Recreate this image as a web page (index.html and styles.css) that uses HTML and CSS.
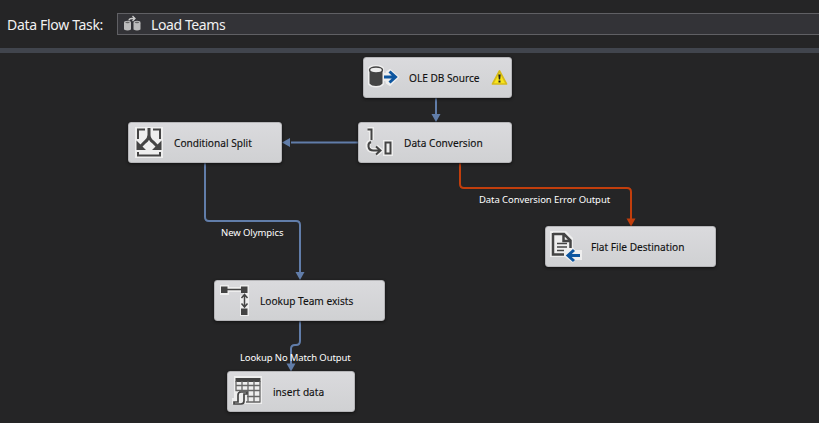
FILE: index.html
```html
<!DOCTYPE html>
<html lang="en">
<head>
<meta charset="utf-8">
<title>Data Flow Task</title>
<link rel="stylesheet" href="styles.css">
</head>
<body>
<header class="toolbar">
  <span class="toolbar-label">Data Flow Task:</span>
  <div class="picker">
    <svg class="picker-icon" width="20" height="18" viewBox="0 0 20 18">
      <g fill="#bcbcbc"><path d="M2 8v6.500q3.500 2 7 0V8zM11.500 8v6.500q3.500 2 7 0V8z"/><ellipse cx="5.500" cy="7.500" rx="3.500" ry="1.800"/><ellipse cx="15" cy="7.500" rx="3.500" ry="1.800"/></g>
      <g fill="#666"><ellipse cx="5.500" cy="7.500" rx="2.200" ry=".7"/><ellipse cx="15" cy="7.500" rx="2.200" ry=".7"/></g>
      <path d="M7 5.500q0-2 3-2h3M10.500 1l2.500 2.500L10.500 6" fill="none" stroke="#ccc" stroke-width="1.300"/>
    </svg>
    <span class="picker-text">Load Teams</span>
  </div>
</header>
<main class="canvas">
  <svg class="wires" width="819" height="370" viewBox="0 53 819 370">
    <g class="wire">
      <path d="M436 97v18M358 142.500h-67M205 163v54q0 4 4 4h87q4 0 4 4v49M300 320v21q0 4-4 4h-1q-4 0-4 4v15"/>
    </g>
    <path class="wire-error" d="M460 162v22q0 4 4 4h163q4 0 4 4v28"/>
    <g fill="#617da9"><path d="M431.500 114h9l-4.500 8zM290 138v9l-8-4.500zM295.500 272h9l-4.500 8zM286.500 363.500h9l-4.500 8z"/></g>
    <path fill="#c23e0c" d="M626.500 218.500h9l-4.500 8z"/>
  </svg>
  <span class="wire-label label-error">Data Conversion Error Output</span>
  <span class="wire-label label-new">New Olympics</span>
  <span class="wire-label label-nomatch">Lookup No Match Output</span>

  <div class="node source">
    <svg class="icon" width="40" height="40" viewBox="0 0 40 40">
      <path d="M6 12q0-3 7-3t7 3v5h4v-2l3-2 8 7-8 8-3-2-1-3h-3v4q-2 2.500-7 2.500t-7-2.500z" fill="#eee" stroke="#eee" stroke-width="2"/>
      <path d="M6.500 13v13.500q2 2.500 6.500 2.500t6.500-2.500V13z" fill="#444"/>
      <ellipse cx="13" cy="13" rx="6.500" ry="3" fill="#eee" stroke="#444" stroke-width="1.500"/>
      <path d="M20 20h12M26 14.500l6 5.500-6 5.500" class="blue-arrow halo"/>
      <path d="M21 20h11M26.500 14.500l6 5.500-6 5.500" class="blue-arrow"/>
    </svg>
    <span class="node-title">OLE DB Source</span>
    <svg class="warning" width="17" height="17" viewBox="0 0 17 17"><path d="M8.500 2 15.500 15H1.500z" fill="#f8e51c" stroke="#d6bb18" stroke-width="1.700" stroke-linejoin="round"/><path d="M7.300 5.500h2.400l-.5 5H7.800zM7.500 11.500h2v2h-2z" fill="#222"/></svg>
  </div>
  <div class="node conversion">
    <svg class="icon" width="40" height="40" viewBox="0 0 40 40">
      <path class="halo" d="M9.500 7.500h4V18M12.500 20q-3 1-2.500 4.500.5 4 5 4h6M18 24.500l4.500 4-4.500 4M27.500 20.500h5v11h-5z"/>
      <path class="ink" d="M9.500 7.500h4V18M13 20q-3 1-2.500 4.500.5 4 5 4h6M18 24.500l4.500 4-4.500 4M27.500 20.500h5v11h-5z"/>
    </svg>
    <span class="node-title">Data Conversion</span>
  </div>
  <div class="node split">
    <svg class="icon" width="40" height="40" viewBox="0 0 40 40">
      <path d="M7 5h28v31H7z" fill="#eee"/>
      <g class="ink"><path d="M17 7.500H10V17M25 7.500h7V17M10 30v3.500h22V30"/><path d="M21 6v7q0 4-4 7l-5 5M21 13q0 4 4 7l5 5" stroke-width="3"/></g>
      <path d="M8.500 18.500V28H18zM33.500 18.500V28H24z" fill="#444"/>
    </svg>
    <span class="node-title">Conditional Split</span>
  </div>
  <div class="node flatfile">
    <svg class="icon" width="40" height="40" viewBox="0 0 40 40">
      <path d="M5 5h16l7 7v9l2 3h7v10h-7l-2 3-8-6H5z" fill="#eee"/>
      <path d="M8 8h11l6.500 6.500V22M8 7v21.500h11M18.500 8v7h7" fill="none" stroke="#444" stroke-width="2.500"/>
      <path d="M12 17.500h10M12 21h10M12 24.500h7" fill="none" stroke="#444" stroke-width="1.500"/>
      <path d="M35 28.500H23M29 23l-6 5.500 6 5.500" transform="translate(0 1)" class="blue-arrow"/>
    </svg>
    <span class="node-title">Flat File Destination</span>
  </div>
  <div class="node lookup">
    <svg class="icon" width="40" height="40" viewBox="0 0 40 40">
      <path d="M6 5h9v2h11V5h9v31h-9V15.500h3V12H15v3H6z" fill="#eee"/>
      <path d="M7 6.500h6.500V13H7zM27 6.500h6.500V13H27zM27 28.500h6.500V35H27z" fill="#444"/>
      <path d="M13 9.500h14M30.500 14.500v12M27.500 18l3-3.500 3 3.500M27.500 23.500l3 3.500 3-3.500" fill="none" stroke="#444" stroke-width="1.500"/>
    </svg>
    <span class="node-title">Lookup Team exists</span>
  </div>
  <div class="node insert">
    <svg class="icon" width="40" height="40" viewBox="0 0 40 40">
      <path d="M7 5h28v28H5v-6h2z" fill="#eee"/>
      <path d="M8.500 7h25v4h-25z" fill="#444"/>
      <path d="M9 10v10M15 10v10M21 10v21M27 10v21M33 10v21M8.500 14.500h25M8.500 19.500h25M20 25.500h13M19 31h14.500" fill="none" stroke="#666" stroke-width="1.300"/>
      <path d="M12 21h8v2h-3v7q0 3-3 3H7v-2h4v-7q0-3 3-3z" fill="#eee" stroke="#444" stroke-width="1.700"/>
    </svg>
    <span class="node-title">insert data</span>
  </div>
</main>
</body>
</html>
```
FILE: styles.css
```css
* { box-sizing: border-box; }
body {
  margin: 0;
  width: 819px;
  height: 423px;
  overflow: hidden;
  background: #252526;
  font-family: "Noto Sans", "Open Sans", sans-serif;
}
.toolbar {
  display: flex;
  align-items: center;
  height: 53px;
  padding: 0 0 4px 7px;
  border-bottom: 5px solid #41454d;
  color: #f1f1f1;
  font-size: 14px;
  line-height: 20px;
  white-space: nowrap;
}
.toolbar-label { width: 110px; padding-top: 5px; letter-spacing: -.32px; }
.picker {
  display: flex;
  align-items: center;
  flex: 1;
  height: 22px;
  margin-top: 3px;
  padding-left: 4px;
  background: #333337;
  border: 1px solid #606064;
  border-right: 0;
}
.picker-icon { margin-right: 9px; }
.picker-text { padding-top: 2px; letter-spacing: -.4px; }
.canvas { position: relative; height: 370px; }
.wires { display: block; }
.wire, .wire-error { fill: none; stroke: #617da9; stroke-width: 2; }
.wire-error { stroke: #c23e0c; }
.wire-label {
  position: absolute;
  color: #fff;
  font-size: 9.5px;
  line-height: 14px;
  letter-spacing: -.08px;
  white-space: nowrap;
}
.label-error { left: 479px; top: 140px; }
.label-new { left: 221px; top: 173px; }
.label-nomatch { left: 240px; top: 298px; letter-spacing: -.13px; }
.node {
  position: absolute;
  display: flex;
  align-items: center;
  height: 41px;
  padding-left: 45px;
  background: linear-gradient(#dadadd, #d0d1d3);
  border: 1px solid #b5b5b8;
  border-radius: 3px;
  box-shadow: 0 1px 3px #111;
  color: #111;
  font-size: 11.5px;
  line-height: 16px;
  white-space: nowrap;
}
.node-title { transform: scaleX(.88); transform-origin: left center; -webkit-text-stroke: .15px #111; }
.icon { position: absolute; left: -1px; top: -1px; }
.warning { position: absolute; right: 3px; top: 11px; }
.source { left: 363px; top: 4px; width: 149px; }
.conversion { left: 358px; top: 69px; width: 154px; }
.split { left: 128px; top: 69px; width: 154px; }
.flatfile { left: 545px; top: 173px; width: 171px; }
.lookup { left: 214px; top: 227px; width: 171px; }
.insert { left: 227px; top: 318px; width: 128px; }
.blue-arrow { fill: none; stroke: #0d56a0; stroke-width: 3; }
.halo, .blue-arrow.halo { fill: none; stroke: #eee; stroke-width: 5; }
.ink { fill: none; stroke: #444; stroke-width: 2; }
```
